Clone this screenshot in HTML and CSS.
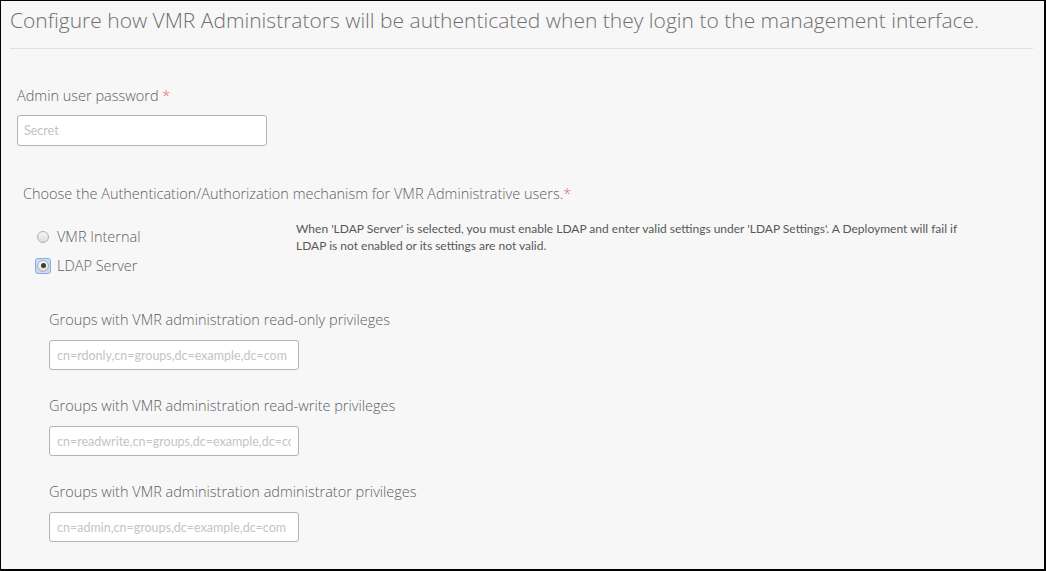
FILE: index.html
```html
<!DOCTYPE html>
<html>
<head>
<meta charset="utf-8">
<link rel="stylesheet" href="styles.css">
</head>
<body>
<div class="page">
  <div class="header">
    <h1 class="title">Configure how VMR Administrators will be authenticated when they login to the management interface.</h1>
  </div>
  <div class="form">
    <div class="field">
      <label class="label">Admin user password <span class="req">*</span></label>
      <input class="input input-main" type="text" placeholder="Secret">
    </div>
    <div class="auth">
      <div class="auth-title">Choose the Authentication/Authorization mechanism for VMR Administrative users.<span class="req">*</span></div>
      <div class="auth-row">
        <div class="radios">
          <div class="radio-item"><span class="radio-wrap"><span class="radio"></span></span><span class="radio-label">VMR Internal</span></div>
          <div class="radio-item"><span class="radio-wrap focus"><span class="radio checked"></span></span><span class="radio-label">LDAP Server</span></div>
        </div>
        <p class="note">When 'LDAP Server' is selected, you must enable LDAP and enter valid settings under 'LDAP Settings'. A Deployment will fail if LDAP is not enabled or its settings are not valid.</p>
      </div>
      <div class="groups">
        <div class="gfield">
          <label class="label">Groups with VMR administration read-only privileges</label>
          <input class="input" type="text" placeholder="cn=rdonly,cn=groups,dc=example,dc=com">
        </div>
        <div class="gfield">
          <label class="label">Groups with VMR administration read-write privileges</label>
          <input class="input" type="text" placeholder="cn=readwrite,cn=groups,dc=example,dc=com">
        </div>
        <div class="gfield">
          <label class="label">Groups with VMR administration administrator privileges</label>
          <input class="input" type="text" placeholder="cn=admin,cn=groups,dc=example,dc=com">
        </div>
      </div>
    </div>
  </div>
</div>
</body>
</html>
```
FILE: styles.css
```css
* { box-sizing: border-box; }
html, body { margin: 0; padding: 0; background: #000; }
body { font-family: "Open Sans", "Noto Sans", sans-serif; }

.page {
  width: 1046px;
  height: 571px;
  background: #f7f7f7;
  border-style: solid;
  border-color: #000;
  border-width: 1px 2px 2px 1px;
  overflow: hidden;
}

.header {
  margin: 0 11px 0 9px;
  height: 48px;
  border-bottom: 1px solid #e1e1e1;
  padding-top: 6px;
}
.title {
  margin: 0;
  font-size: 21px;
  line-height: 27px;
  font-weight: 300;
  color: #707070;
  white-space: nowrap;
}

.form {
  padding: 37px 0 0 16px;
}

.label {
  display: block;
  font-size: 14.5px;
  line-height: 20px;
  font-weight: 300;
  color: #5e5e5e;
}
.req { color: #e06666; }

.input {
  display: block;
  width: 250px;
  height: 30px;
  margin: 10px 0 0 0;
  padding: 0 7px;
  border: 1px solid #b3b3b3;
  border-radius: 3px;
  background: #fff;
  font-family: Lato, "Open Sans", sans-serif;
  font-size: 12.5px;
  font-weight: 400;
  color: #555;
  outline: none;
}
.input-main { height: 31px; margin-top: 9px; padding-left: 6px; }
.input::placeholder { color: #c4c4c4; }

.auth {
  margin: 38px 0 0 6px;
}
.auth-title {
  font-size: 14.5px;
  line-height: 20px;
  font-weight: 300;
  color: #5e5e5e;
}

.auth-row {
  display: flex;
  align-items: flex-start;
  margin-top: 16px;
}
.radios {
  width: 273px;
  padding: 2px 0 0 12px;
}
.radio-item {
  display: flex;
  align-items: center;
  height: 29px;
}
.radio-wrap {
  display: flex;
  align-items: center;
  justify-content: center;
  width: 16px;
  height: 16px;
  margin-right: 6px;
  border-radius: 3px;
  border: 1px solid transparent;
}
.radio-wrap.focus {
  background: #c9dcf7;
  border-color: #86ade6;
}
.radio {
  display: block;
  width: 12px;
  height: 12px;
  border-radius: 50%;
  border: 1px solid #b0b0b0;
  background: linear-gradient(#f7f7f7, #dcdcdc);
  position: relative;
}
.radio.checked::after {
  content: "";
  position: absolute;
  left: 2.5px;
  top: 2.5px;
  width: 5px;
  height: 5px;
  border-radius: 50%;
  background: #3c3c3c;
}
.radio-label {
  font-size: 14.5px;
  font-weight: 300;
  color: #5e5e5e;
}

.note {
  margin: 0;
  width: 690px;
  font-family: Lato, "Open Sans", sans-serif;
  font-size: 12px;
  line-height: 17px;
  color: #585858;
}

.groups {
  margin: 30px 0 0 26px;
}
.gfield + .gfield { margin-top: 26px; }
```
